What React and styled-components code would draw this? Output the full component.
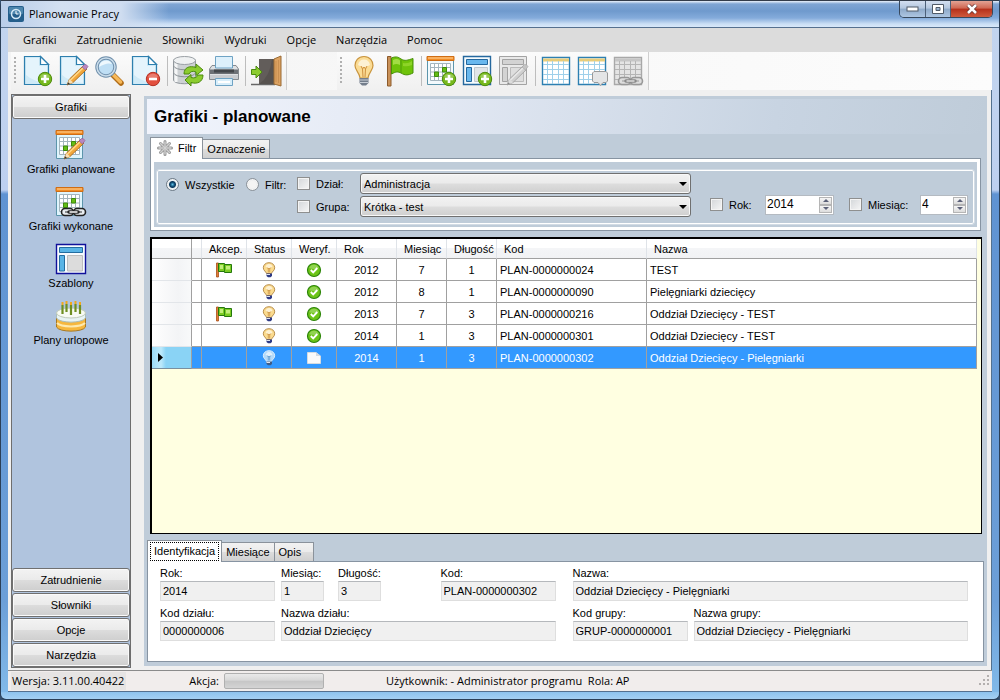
import React from 'react';
import styled, { createGlobalStyle, css } from 'styled-components';

const sans = '"Liberation Sans", Arial, sans-serif';
const shell = '"Open Sans", "Noto Sans", sans-serif';

const GlobalStyle = createGlobalStyle`
  * { box-sizing: border-box; }
  body { margin: 0; background: #35506f; font: 11px/14px ${sans}; color: #000; }
  button, input, select { font: inherit; color: inherit; margin: 0; }
  button { padding: 0; border: 0; background: none; }
`;

/* ---------- window frame ---------- */

const Window = styled.div`
  min-height: 100vh;
  display: grid;
  grid-template-rows: 28px 24px 38px 1fr 22px;
  padding: 0 7px 7px 7px;
  border: 1px solid #2b3f57;
  border-top: 0;
  border-radius: 6px;
  background:
    linear-gradient(#8ec3ee, #a5d0f3) bottom / 100% 7px no-repeat,
    linear-gradient(#c3d5ee 0, #bdd0f0 190px, #5f93d2 194px, #6c9fd8 600px, #83bbea 100%);
`;

const TitleBar = styled.header`
  display: flex;
  align-items: center;
  gap: 5px;
  margin: 0 -7px;
  padding-left: 7px;
  border-top: 1px solid #333c4a;
  border-bottom: 1px solid #55708f;
  background:
    linear-gradient(90deg, #b9cde9 0, #d3e0f1 60px, #cfddf0 120px, rgba(190, 211, 238, 0) 168px),
    linear-gradient(#eaf2fb 0, #7fa5d4 3px, #6f9acd 10px, #84abdb 17px, #cbdff5 23px, #d8e8fa 100%);
`;

const WindowTitle = styled.h1`
  flex: 1;
  margin: 0;
  font: 11px/18px ${shell};
`;

const Caption = styled.div`
  display: flex;
  align-self: flex-start;
  margin-right: 6px;
  border: 1px solid #38485c;
  border-top: 0;
  border-radius: 0 0 5px 5px;
  overflow: hidden;
`;

const CaptionButton = styled.button`
  width: ${(p) => (p.$close ? 42 : 25)}px;
  height: 16px;
  display: grid;
  place-items: center;
  background: ${(p) => (p.$close
    ? 'linear-gradient(#e3a394 0, #cf6752 45%, #b5301b 50%, #cf5a3d 100%)'
    : 'linear-gradient(#d3dff0 0, #b3c6de 45%, #8ea9c9 50%, #aec6e2 100%)')};
  & + & { border-left: 1px solid #4d6079; }
`;

const MenuBar = styled.nav`
  display: flex;
  align-items: center;
  gap: 20px;
  padding-left: 15px;
  background: #dcdcdc;
  font: 11px/18px ${shell};
`;

const MenuItem = styled.button`
  white-space: nowrap;
`;

const ToolRow = styled.div`
  display: flex;
  gap: 50px;
  padding-left: 3px;
  background: linear-gradient(90deg, #f4f4f4, #fcfcfc);
`;

const ToolStrip = styled.div`
  display: flex;
  align-items: center;
  padding: 0 2px 0 3px;
  border-right: 1px solid #cfcfcf;
  background: linear-gradient(#fbfbfb, #f0f0f0);
`;

const Grip = styled.span`
  width: 2px;
  height: 28px;
  margin-right: 4px;
  background: repeating-linear-gradient(#b0b0b0 0 2px, transparent 2px 4px);
`;

const ToolSeparator = styled.span`
  width: 1px;
  height: 30px;
  margin: 0 2px 0 3px;
  background: #bdbdbd;
`;

const ToolButton = styled.button`
  width: 36px;
  height: 36px;
  display: grid;
  place-items: center;
`;

const Content = styled.div`
  display: flex;
  gap: 13px;
  padding: 4px 4px 2px 3px;
  background: #f0f0f0;
  border-right: 1px solid #53718f;
`;

/* ---------- side bar ---------- */

const SideBar = styled.aside`
  flex: none;
  width: 120px;
  display: flex;
  flex-direction: column;
  gap: 1px;
  border: 1px solid #6e6e6e;
  background: #b0c4de;
`;

const SideButton = styled.button`
  height: 24px;
  border: 1px solid #707070;
  border-radius: 3px;
  box-shadow: inset 0 0 0 1px #fafafa;
  background: linear-gradient(#f3f3f3 0, #ebebeb 48%, #dcdcdc 52%, #cecece 100%);
`;

const SideItems = styled.div`
  flex: 1;
  display: flex;
  flex-direction: column;
  align-items: center;
  gap: 10px;
  padding-top: 9px;
`;

const SideItem = styled.button`
  display: grid;
  justify-items: center;
  gap: 1px;
  svg { display: block; }
`;

/* ---------- main area ---------- */

const Main = styled.main`
  flex: 1;
  min-width: 0;
  display: flex;
  flex-direction: column;
  margin: 2px 0;
  padding: 3px 3px 4px;
  background: #bfccd9;
`;

const PageHeading = styled.h2`
  margin: 0 0 3px;
  padding-left: 7px;
  font: bold 17px/35px ${sans};
  background: linear-gradient(100deg, #f1f4fc 0, #e2e8f3 35%, #c8d4e2 75%, #bfccd9 100%);
`;

const Tabs = styled.div`
  display: flex;
  align-items: flex-end;
  padding-left: ${(p) => (p.$inset ? 3 : 0)}px;
`;

const Tab = styled.button`
  position: relative;
  height: 19px;
  min-width: 39px;
  padding: 0 4px;
  text-align: left;
  border: 1px solid #8a929b;
  border-bottom: 0;
  border-left-width: ${(p) => (p.$active ? 1 : 0)}px;
  background: linear-gradient(#f2f2f2 0, #ebebeb 48%, #dddddd 52%, #d0d0d0 100%);
  ${(p) => p.$active && css`
    height: 22px;
    margin-bottom: -1px;
    padding-bottom: 3px;
    background: #fff;
    z-index: 1;
  `}
  ${(p) => p.$icon && css`
    display: flex;
    align-items: center;
    gap: 5px;
    padding: 0 6px 2px;
  `}
`;

const FocusText = styled.span`
  display: block;
  margin: 0 -2px -2px;
  padding: 1px 3px 2px;
  border: 1px dotted #000;
`;

const FilterPanel = styled.section`
  margin: 0 3px 6px;
  padding: 3px;
  border: 1px solid #8794a2;
  background: #fff;
`;

const FilterInner = styled.div`
  padding: 8px 3px 3px;
  background: #bfccd9;
`;

const FilterGroup = styled.fieldset`
  display: flex;
  align-items: center;
  margin: 0;
  min-width: 0;
  padding: 2px 5px 6px 8px;
  border: 1px solid #fff;
  outline: 1px solid #d3dce5;
  border-radius: 2px;
`;

const Choice = styled.label`
  display: flex;
  align-items: center;
  gap: 6px;
  width: ${(p) => p.$width}px;
  height: 21px;
  flex: none;
`;

const Radio = styled.input.attrs({ type: 'radio' })`
  appearance: none;
  width: 13px;
  height: 13px;
  border: 1px solid #8b9299;
  border-radius: 50%;
  background: radial-gradient(#f4f4f4 40%, #dde0e3 100%);
  box-shadow: inset 0 0 0 1px #f4f4f4;
  &:checked {
    border-color: #6d7a86;
    background: radial-gradient(circle at 50% 50%, #5fc0e4 0, #12507a 2px, #0d3a5c 3px, #e8eef2 4px);
  }
`;

const Check = styled.input.attrs({ type: 'checkbox' })`
  appearance: none;
  width: 13px;
  height: 13px;
  border: 1px solid #8e8f8f;
  background: linear-gradient(135deg, #d3d6d9, #f6f6f6);
  box-shadow: inset 0 0 0 1px #f4f4f4;
`;

const FilterRadios = styled.div`
  display: flex;
  align-self: flex-start;
  padding-top: 1px;
`;

const FilterPicks = styled.div`
  flex: 1;
  display: grid;
  grid-template-columns: 63px 1fr;
  row-gap: 2px;
`;

const SelectBox = styled.span`
  display: grid;
  grid-template-columns: 1fr 14px;
  align-items: center;
  height: 21px;
  border: 1px solid #707070;
  border-radius: 3px;
  box-shadow: inset 0 0 0 1px #f8f8f8;
  background: linear-gradient(#f2f2f2 0, #ebebeb 48%, #dddddd 52%, #cfcfcf 100%);
  select {
    grid-area: 1 / 1 / 2 / 3;
    width: 100%;
    height: 19px;
    padding: 0 16px 0 3px;
    border: 0;
    appearance: none;
    background: none;
  }
  svg { grid-area: 1 / 2; justify-self: center; pointer-events: none; }
`;

const FilterNumbers = styled.div`
  display: flex;
  align-items: center;
  align-self: flex-end;
  margin: 0 0 2px 19px;
`;

const SpinBox = styled.span`
  display: flex;
  width: ${(p) => p.$width}px;
  height: 20px;
  margin-right: ${(p) => p.$gap || 0}px;
  border: 1px solid #b4bac1;
  background: #fff;
  input {
    flex: 1;
    min-width: 0;
    padding: 0 1px 2px;
    border: 0;
    background: none;
    font-size: 12px;
  }
`;

const SpinButtons = styled.span`
  display: grid;
  width: 15px;
  grid-template-rows: 1fr 1fr;
  padding: 1px;
  button {
    display: grid;
    place-items: center;
    border: 1px solid #b5b5b5;
    background: linear-gradient(#f6f6f6, #dcdcdc);
  }
`;

/* ---------- data grid ---------- */

const GridFrame = styled.section`
  flex: 1;
  margin: 0 2px 6px 3px;
  padding-right: 4px;
  border: solid #000;
  border-width: 2px 1px 1px 2px;
  background: #ffffe1;
`;

const DataTable = styled.table`
  width: 100%;
  table-layout: fixed;
  border-collapse: separate;
  border-spacing: 0;
  background: #fff;
`;

const HeadCell = styled.th`
  height: 20px;
  padding: 0 0 0 7px;
  border-right: 1px solid #dfe3e8;
  border-bottom: 1px solid #a0a0a0;
  background: linear-gradient(#fff 0, #fff 45%, #f4f5f7 50%, #f1f2f4 100%);
  font-weight: normal;
  text-align: left;
  white-space: nowrap;
  &:first-child { border-right-color: #a0a0a0; }
`;

const Row = styled.tr`
  ${(p) => p.$selected && css`
    background: #3399ff;
    color: #fff;
  `}
`;

const Cell = styled.td`
  height: 22px;
  padding: 0 3px;
  border-right: 1px solid #a0a0a0;
  border-bottom: 1px solid #a0a0a0;
  text-align: ${(p) => (p.$center ? 'center' : 'left')};
  white-space: nowrap;
  svg { display: block; margin: 0 auto; }
`;

const RowHead = styled(Cell)`
  padding: 0 0 0 6px;
  background: ${(p) => (p.$selected
    ? 'linear-gradient(90deg, #9bdcf8 0, #bde9fb 9px, #8ad3f5 14px, #8ad3f5 100%)'
    : 'linear-gradient(90deg, #fff 0, #fafafb 10px, #f3f4f6 26px, #f8f9fa 100%)')};
  border-bottom-color: ${(p) => (p.$selected ? '#7a8f9f' : '#e2e5e9')};
  svg { margin: 0; }
`;

/* ---------- record details ---------- */

const Details = styled.section`
  height: 101px;
  display: grid;
  grid-template-columns: 1fr 1fr;
  align-content: start;
  gap: 5px 17px;
  padding: 4px 15px 0 12px;
  border: 1px solid #8794a2;
  background: #fff;
`;

const FieldLine = styled.div`
  display: flex;
  gap: 6px;
`;

const Field = styled.label`
  display: grid;
  gap: 1px;
  min-width: 0;
  flex: ${(p) => (p.$width ? `0 0 ${p.$width}px` : '1')};
  margin-left: ${(p) => (p.$end ? 'auto' : p.$apart ? '8px' : '0')};
  white-space: nowrap;
  input {
    width: 100%;
    height: 20px;
    padding: 0 2px;
    border: 1px solid #dedede;
    border-top-color: #b5b8bc;
    background: #f0f0f0;
  }
`;

/* ---------- status bar ---------- */

const StatusBar = styled.footer`
  display: flex;
  align-items: center;
  border-top: 1px solid #8b8b8b;
  border-bottom: 1px solid #55708f;
  padding-left: 3px;
  background: #f1edec;
  font: 11px/18px ${shell};
  white-space: nowrap;
`;

const Version = styled.span`
  width: 115px;
  padding-left: 1px;
  background: #e6e4e3;
`;

const ActionLabel = styled.label`
  display: flex;
  align-items: center;
  justify-content: flex-end;
  gap: 5px;
  width: 198px;
`;

const ActionProgress = styled.progress`
  appearance: none;
  width: 100px;
  height: 16px;
  border: 1px solid #b0b0b0;
  border-radius: 2px;
  background: linear-gradient(#e9e9e9 0, #d8d8d8 45%, #c6c6c6 50%, #d4d4d4 100%);
  &::-webkit-progress-bar { background: none; }
`;

const UserInfo = styled.span`
  flex: 1;
  padding-left: 62px;
  white-space: pre;
`;

/* ---------- icons ---------- */

const Svg = ({ size = 32, box = 32, children }) => (
  <svg width={size} height={size} viewBox={`0 0 ${box} ${box}`} fill="none" aria-hidden="true">{children}</svg>
);

const Sheet = () => (
  <>
    <path d="M2.500 1.500H18.500L26.500 9.500V29.500H2.500Z" fill="#cfeaf7" stroke="#2e7fae" strokeWidth="1.200" />
    <path d="M4 3H17V11H25V28Q12 27 4 20Z" fill="#eef8fd" opacity=".7" />
    <path d="M18.500 1.500V9.500H26.500Z" fill="#fff" stroke="#2e7fae" strokeWidth="1.200" />
  </>
);

const Badge = ({ minus }) => (
  <>
    <circle cx="23" cy="24" r="6.700" fill={minus ? '#e2503f' : '#76b81c'} stroke={minus ? '#b43226' : '#4d8a0c'} />
    <path d="M18 22a5.500 5.500 0 0 1 10 0Q23 24 18 22Z" fill="#fff" opacity=".25" />
    <path d={minus ? 'M19 24H27' : 'M19 24H27M23 20V28'} stroke="#fff" strokeWidth="2.600" />
  </>
);

const Pencil = ({ gray }) => (
  <>
    <path d="M9 30L11.500 24L25.500 10.500L29 14L15 27.500Z" fill={gray ? '#d0d0d0' : '#f2a73b'} stroke={gray ? '#a2a2a2' : '#a5661a'} strokeWidth=".9" />
    <path d="M12.500 25L26.500 11.500" stroke={gray ? '#e8e8e8' : '#ffd98a'} strokeWidth="1.500" />
    <path d="M9 30L11.500 24L15 27.500Z" fill={gray ? '#ddd' : '#f8dfb4'} />
    <path d="M9 30L10.200 27.200L12 29Z" fill={gray ? '#888' : '#333'} />
    <path d="M24 12L26.500 9.500Q28.500 9 30 11.500L27.500 15Z" fill={gray ? '#c4c4c4' : '#b887c0'} stroke={gray ? '#aaa' : '#8f6198'} strokeWidth=".7" />
  </>
);

const IconNew = () => <Svg><Sheet /><Badge /></Svg>;
const IconEdit = () => <Svg><Sheet /><Pencil /></Svg>;
const IconDelete = () => <Svg><Sheet /><Badge minus /></Svg>;

const IconSearch = () => (
  <Svg>
    <path d="M19 20L27 28" stroke="#b06c17" strokeWidth="5.500" strokeLinecap="round" />
    <path d="M19 19.500L26.500 27" stroke="#f7b95a" strokeWidth="3.500" strokeLinecap="round" />
    <circle cx="12" cy="12" r="9" fill="#bfdff5" stroke="#6f8fab" strokeWidth="3.500" />
    <circle cx="12" cy="12" r="9" stroke="#c9dcea" strokeWidth="1.500" />
    <path d="M5 12a7 7 0 0 1 13-3Q13 7 5 12Z" fill="#eef8fe" />
  </Svg>
);

const IconDatabase = () => (
  <Svg>
    <path d="M1.500 5V25C1.500 30 23.500 30 23.500 25V5Z" fill="#cdd1d4" stroke="#92989d" />
    <path d="M4 7V27" stroke="#f5f6f7" strokeWidth="3" />
    <path d="M1.500 11C4 16 21 16 23.500 11M1.500 18C4 23 21 23 23.500 18" stroke="#8b9196" />
    <ellipse cx="12.500" cy="5.500" rx="11" ry="4" fill="#eff1f2" stroke="#9aa0a5" />
    <path d="M12 19C12 12 18 10.500 24 12.500V9L31 15L24 20.500V17Q19 15 17 19Z" fill="#8ccc2f" stroke="#4b8b0d" />
    <path d="M31 20C31 27 25 29.500 19 27.500V31L13 25L19 19.500V22.500Q24 24 26 20Z" fill="#8ccc2f" stroke="#4b8b0d" />
  </Svg>
);

const IconPrint = () => (
  <Svg>
    <path d="M1.500 14L4 10.500H28L30.500 14V24.500H1.500Z" fill="#dfe1e3" stroke="#868b90" />
    <path d="M7.500 1.500H24.500V13H7.500Z" fill="#ddf0fb" stroke="#6ea3c4" />
    <path d="M2 14.500H30V19H2Z" fill="#6d7176" />
    <path d="M6 14.500H26V17.500H6Z" fill="#44484c" />
    <path d="M2 20H30V24H2Z" fill="#c9ccd0" />
    <path d="M7.500 23.500H24.500V30.500H7.500Z" fill="#d8eefa" stroke="#6ea3c4" />
    <path d="M10 27H22" stroke="#fff" strokeWidth="2" />
  </Svg>
);

const IconExit = () => (
  <Svg>
    <path d="M1 29.500H25" stroke="#666" strokeWidth="1.500" />
    <path d="M9 4H24V29H9Z" fill="#57524f" />
    <path d="M9 29Q20 22 22 4H9Z" fill="#625d5a" />
    <path d="M24 4L31 1V31L24 29Z" fill="#dca261" stroke="#9a6b35" />
    <path d="M26 6V27M28.500 5V28" stroke="#c98f50" />
    <path d="M1.500 14.500H6V11L12 17L6 23V19.500H1.500Z" fill="#8ccc2f" stroke="#4b8b0d" />
  </Svg>
);

const IconBulb = () => (
  <Svg>
    <path d="M16 1.500C10 1.500 7 6 7 10.500C7 15.500 11.500 17.500 12 23H20C20.500 17.500 25 15.500 25 10.500C25 6 22 1.500 16 1.500Z" fill="#fbdc95" stroke="#c9953f" strokeWidth="1.200" />
    <path d="M10 10Q11 4.500 16 4.500Q21 4.500 22 10Q16 14 10 10Z" fill="#fff" opacity=".6" />
    <path d="M13 11L14.500 14L16 12L17.500 14L19 11M14.500 14L15 22M17.500 14L17 22" stroke="#cf9140" />
    <path d="M11.500 23H20.500V28L18 30.500H14L11.500 28Z" fill="#737d8b" />
    <path d="M12 25H20M12 27.500H20" stroke="#c8ced6" />
  </Svg>
);

const IconFlag = () => (
  <Svg>
    <path d="M3.500 1.500H7V31H3.500Z" fill="#c99159" stroke="#8c5a2b" />
    <path d="M7.500 3C12 1 14 2 17 4C21 6.500 24 5 29 3.500V18C24 20.500 21 20.500 17 18C14 16.500 12 16.500 7.500 19Z" fill="#6fc30a" stroke="#489007" />
    <path d="M9 5Q13 3 16 5.500V10Q12 8 9 10Z" fill="#b9e85e" opacity=".7" />
    <path d="M17 5V18" stroke="#4f9d0b" />
    <path d="M19 8Q24 9 28 6V10Q23 12 19 11Z" fill="#9bdc35" opacity=".7" />
  </Svg>
);

const Calendar = ({ bright }) => (
  <>
    <path d="M1.500 5H27.500V29.500H1.500Z" fill={bright ? '#dff4fc' : '#f3fafd'} stroke="#5c95ab" />
    <path d="M1 1.500H28V5.500H1Z" fill="#f28c24" stroke="#cf6d14" />
    <path d="M2 3H27" stroke="#ffd59b" />
    <path d="M4.500 8.500H24.500V25.500H4.500Z" fill="#fff" stroke="#a4b5be" />
    <path d="M4.500 12.500H24.500M4.500 17H24.500M4.500 21.500H24.500M8.500 8.500V25.500M12.500 8.500V25.500M16.500 8.500V25.500M20.500 8.500V25.500" stroke="#a4b5be" />
    <path d="M8.500 17H12.500V21.500H8.500ZM16.500 12.500H20.500V17H16.500Z" fill="#64bd16" stroke="#3f8c0b" />
  </>
);

const Chain = ({ gray }) => (
  <>
    <rect x="6.500" y="22.500" width="12" height="7" rx="3.500" fill={gray ? '#ddd' : '#e9edf0'} stroke={gray ? '#989898' : '#222'} strokeWidth="1.600" />
    <rect x="18.500" y="22.500" width="12" height="7" rx="3.500" fill={gray ? '#ddd' : '#e9edf0'} stroke={gray ? '#989898' : '#222'} strokeWidth="1.600" />
    <path d="M10 26H15M22 26H27" stroke={gray ? '#999' : '#333'} strokeWidth="1.200" />
    <path d="M14 26H23" stroke={gray ? '#888' : '#222'} strokeWidth="3.500" strokeLinecap="round" />
    <path d="M14.500 26H22.500" stroke={gray ? '#ddd' : '#fff'} strokeWidth="1.500" />
  </>
);

const Template = ({ gray }) => {
  const edge = gray ? '#a3a3a3' : '#25689e';
  const fill = gray ? '#d3d3d3' : '#69b8ee';
  return (
    <>
      <path d="M1.500 1.500H28.500V29.500H1.500Z" fill={gray ? '#e9e9e9' : '#f5fbfe'} stroke={edge} strokeWidth={gray ? 1 : 1.400} />
      <path d="M4.500 4.500H25.500V9.500H4.500Z" fill={fill} stroke={edge} />
      <path d="M4.500 12.500H9.500V26.500H4.500Z" fill={fill} stroke={edge} />
      <path d="M12.500 12.500H25.500V26.500H12.500Z" fill={gray ? '#dedede' : '#e1e5e8'} stroke={gray ? '#bbb' : '#c1c8cd'} />
    </>
  );
};

const Spreadsheet = ({ gray }) => (
  <>
    <path d="M2.500 2.500H29.500V29.500H2.500Z" fill={gray ? '#e4e4e4' : '#fff'} stroke={gray ? '#a8a8a8' : '#2d7fb1'} strokeWidth="1.400" />
    <path d="M3 3.500H29V6.500H3Z" fill={gray ? '#c6c6c6' : '#e7cd7c'} />
    <path d="M3 9.500H29M3 14.500H29M3 19.500H29M3 24.500H29M7.500 6V29M12.500 6V29M18.500 6V29M23.500 6V29" stroke={gray ? '#b5b5b5' : '#9fd0ea'} />
  </>
);

const IconCalAdd = () => <Svg><Calendar /><Badge /></Svg>;
const IconTplAdd = () => <Svg><Template /><Badge /></Svg>;
const IconTplEdit = () => <Svg><Template gray /><Pencil gray /></Svg>;
const IconTable = () => <Svg><Spreadsheet /></Svg>;
const IconTableNote = () => (
  <Svg>
    <Spreadsheet />
    <path d="M18 16.500H30L31.500 18V26L30 27.500H27L24.500 30.500L22 27.500H18L16.500 26V18Z" fill="#e4e5e6" stroke="#999" />
  </Svg>
);
const IconTableLink = () => <Svg><Spreadsheet gray /><Chain gray /></Svg>;

const IconPlan = () => <Svg><Calendar bright /><Pencil /></Svg>;
const IconDone = () => <Svg><Calendar bright /><Chain /></Svg>;
const IconTemplate = () => (
  <Svg>
    <path d="M1.500 1.500H30.500V30.500H1.500Z" fill="#f7fbff" stroke="#10109a" strokeWidth="1.400" />
    <path d="M4.500 4.500H27.500V9.500H4.500Z" fill="#58b4e6" stroke="#236da0" />
    <path d="M4.500 12.500H9.500V28H4.500Z" fill="#58b4e6" stroke="#236da0" />
    <path d="M12.500 12.500H27.500V28H12.500Z" fill="#dcdcdc" stroke="#bdbdbd" />
  </Svg>
);
const IconCake = () => (
  <Svg>
    <path d="M1.500 14V27C4 32.500 28 32.500 30.500 27V14Z" fill="#f6b73d" stroke="#a77924" />
    <path d="M2 23C6 27.500 26 27.500 30 23" stroke="#fde9ae" strokeWidth="2" />
    <path d="M1.500 13V18C5 23.500 27 23.500 30.500 18V13Z" fill="#e8f4f4" stroke="#a9bdbd" />
    <ellipse cx="16" cy="13" rx="14.500" ry="5" fill="#f8fbf4" stroke="#c0cbb9" />
    <path d="M7.500 5V14M11.500 4V12M16 5V15M20.500 4V12M25 5V14" stroke="#6f8f22" strokeWidth="2.200" />
    <path d="M7.500 2V5M11.500 1V4M16 2V5M20.500 1V4M25 2V5" stroke="#f0a81c" strokeWidth="2" />
  </Svg>
);

const SmallFlag = () => (
  <Svg size={16} box={16}>
    <path d="M.5 1H2.500V15H.5Z" fill="#e08038" stroke="#a84d16" strokeWidth=".8" />
    <path d="M2.500 1.500H8.500V2.500H15.500V10.500H8.500V9.500H2.500Z" fill="#7ccc23" stroke="#24780c" />
    <path d="M4 3H7V7H4ZM10 4H14V7.500H10Z" fill="#c2ee7d" />
    <path d="M8.500 2V10" stroke="#2f8a10" />
  </Svg>
);
const SmallBulb = ({ blue }) => (
  <Svg size={16} box={16}>
    <path d="M8 .7C4.500 .7 2.300 3 2.300 5.800C2.300 8.500 5 9.500 5.500 11.500H10.500C11 9.500 13.700 8.500 13.700 5.800C13.700 3 11.500 .7 8 .7Z" fill={blue ? '#b4daf8' : '#fbdb8e'} stroke={blue ? '#dceefd' : '#b98f4d'} />
    <path d="M4.500 5Q5.500 2 8 2T11.500 5Q8 7 4.500 5Z" fill="#fff" opacity=".6" />
    <path d="M6.200 5.500L7.300 7L8 6L8.700 7L9.800 5.500M7.300 7V10.500M8.700 7V10.500" stroke={blue ? '#5590c8' : '#c58b3c'} strokeWidth=".7" />
    <path d="M5.500 11.500H11V14L9.500 15.300H7L5.500 14Z" fill={blue ? '#3f5c86' : '#2d3a86'} />
    <path d="M5.500 12.500H9" stroke="#dfe5ef" />
  </Svg>
);
const SmallOk = () => (
  <Svg size={16} box={16}>
    <circle cx="8" cy="8" r="6.500" fill="#6cc417" stroke="#2c8409" strokeWidth="1.200" />
    <path d="M3 6a5.400 5.400 0 0 1 10 0Q8 8 3 6Z" fill="#fff" opacity=".25" />
    <path d="M4.800 8L7.200 10.400L11.300 6" stroke="#fff" strokeWidth="1.900" />
  </Svg>
);
const SmallPage = () => (
  <Svg size={16} box={16}>
    <path d="M1.500 2.500H10L14.500 6V13.500H1.500Z" fill="#fafafa" stroke="#d5dbe0" />
    <path d="M10 2.500V6H14.500Z" fill="#d2dae2" />
  </Svg>
);
const AppLogo = () => (
  <Svg size={16} box={16}>
    <rect width="16" height="16" rx="2" fill="#245e8b" />
    <rect x="1" y="1" width="14" height="7" rx="1" fill="#4d86ad" />
    <circle cx="8" cy="8" r="4.500" stroke="#d4e9f7" strokeWidth="1.500" />
    <path d="M8 5V8H10.500" stroke="#fff" />
  </Svg>
);
const GearIcon = () => (
  <Svg size={16} box={16}>
    <path d="M8 1.500V14.500M1.500 8H14.500M3.500 3.500L12.500 12.500M12.500 3.500L3.500 12.500" stroke="#979797" strokeWidth="3" strokeLinecap="round" />
    <path d="M8 2V14M2 8H14M3.500 3.500L12.500 12.500M12.500 3.500L3.500 12.500" stroke="#cfcfcf" strokeWidth="1.400" strokeLinecap="round" />
    <circle cx="8" cy="8" r="1.200" fill="#fff" stroke="#999" strokeWidth=".6" />
  </Svg>
);
const Arrow = ({ up, w = 8, color = '#000' }) => (
  <svg width={w} height={w === 8 ? 4 : 3} viewBox="0 0 8 4" aria-hidden="true">
    <path d={up ? 'M0 4L4 0L8 4Z' : 'M0 0H8L4 4Z'} fill={color} />
  </svg>
);

/* ---------- data ---------- */

const menu = ['Grafiki', 'Zatrudnienie', 'Słowniki', 'Wydruki', 'Opcje', 'Narzędzia', 'Pomoc'];

const strips = [
  [[['Nowy', IconNew], ['Edytuj', IconEdit], ['Szukaj', IconSearch], ['Usuń', IconDelete]],
    [['Odśwież', IconDatabase], ['Drukuj', IconPrint]],
    [['Zamknij', IconExit]]],
  [[['Status', IconBulb], ['Akceptacja', IconFlag]],
    [['Dodaj grafik', IconCalAdd], ['Dodaj szablon', IconTplAdd], ['Edytuj szablon', IconTplEdit]],
    [['Tabela', IconTable], ['Uwagi', IconTableNote], ['Powiązania', IconTableLink]]],
];

const sideItems = [
  ['Grafiki planowane', IconPlan],
  ['Grafiki wykonane', IconDone],
  ['Szablony', IconTemplate],
  ['Plany urlopowe', IconCake],
];

const widths = [40, 10, 45, 45, 45, 60, 50, 50, 150];
const heads = ['', '', 'Akcep.', 'Status', 'Weryf.', 'Rok', 'Miesiąc', 'Długość', 'Kod', 'Nazwa'];
const rows = [
  [true, 2012, 7, 1, 'PLAN-0000000024', 'TEST'],
  [false, 2012, 8, 1, 'PLAN-0000000090', 'Pielęgniarki dziecięcy'],
  [true, 2013, 7, 3, 'PLAN-0000000216', 'Oddział Dziecięcy - TEST'],
  [false, 2014, 1, 3, 'PLAN-0000000301', 'Oddział Dziecięcy - TEST'],
  [false, 2014, 1, 3, 'PLAN-0000000302', 'Oddział Dziecięcy - Pielęgniarki'],
];

const ReadField = ({ label, value, ...rest }) => (
  <Field {...rest}>{label}<input readOnly value={value} /></Field>
);

const Spin = ({ id, value, label, ...rest }) => (
  <SpinBox {...rest}>
    <input id={id} type="text" defaultValue={value} aria-label={label} />
    <SpinButtons>
      <button type="button" aria-label="Zwiększ"><Arrow up w={6} color="#5b6078" /></button>
      <button type="button" aria-label="Zmniejsz"><Arrow w={6} color="#5b6078" /></button>
    </SpinButtons>
  </SpinBox>
);

export default function App() {
  return (
    <Window>
      <GlobalStyle />
      <TitleBar>
        <AppLogo />
        <WindowTitle>Planowanie Pracy</WindowTitle>
        <Caption>
          <CaptionButton aria-label="Minimalizuj">
            <svg width="13" height="6" viewBox="0 0 13 6"><rect x="1" y="1" width="11" height="4" fill="#fff" stroke="#505a68" /></svg>
          </CaptionButton>
          <CaptionButton aria-label="Maksymalizuj">
            <svg width="12" height="10" viewBox="0 0 12 10"><path fillRule="evenodd" d="M.5.5H11.500V9.500H.5ZM4 3.500H8V6.500H4Z" fill="#fff" stroke="#505a68" /></svg>
          </CaptionButton>
          <CaptionButton $close aria-label="Zamknij okno">
            <svg width="12" height="10" viewBox="0 0 12 10"><path d="M2 1L10 9M10 1L2 9" stroke="#5a2a28" strokeWidth="4" /><path d="M2 1L10 9M10 1L2 9" stroke="#fff" strokeWidth="2.600" /></svg>
          </CaptionButton>
        </Caption>
      </TitleBar>

      <MenuBar>{menu.map((m) => <MenuItem key={m}>{m}</MenuItem>)}</MenuBar>

      <ToolRow>
        {strips.map((groups, s) => (
          <ToolStrip key={s} role="toolbar">
            <Grip />
            {groups.map((group, g) => (
              <React.Fragment key={g}>
                {g > 0 && <ToolSeparator />}
                {group.map(([name, Icon]) => <ToolButton key={name} aria-label={name}><Icon /></ToolButton>)}
              </React.Fragment>
            ))}
          </ToolStrip>
        ))}
      </ToolRow>

      <Content>
        <SideBar>
          <SideButton>Grafiki</SideButton>
          <SideItems>
            {sideItems.map(([name, Icon]) => <SideItem key={name}><Icon />{name}</SideItem>)}
          </SideItems>
          {['Zatrudnienie', 'Słowniki', 'Opcje', 'Narzędzia'].map((n) => <SideButton key={n}>{n}</SideButton>)}
        </SideBar>

        <Main>
          <PageHeading>Grafiki - planowane</PageHeading>
          <Tabs role="tablist" $inset>
            <Tab role="tab" $active $icon><GearIcon />Filtr</Tab>
            <Tab role="tab">Oznaczenie</Tab>
          </Tabs>
          <FilterPanel>
            <FilterInner>
              <FilterGroup>
                <FilterRadios>
                  <Choice $width={80}><Radio name="mode" defaultChecked />Wszystkie</Choice>
                  <Choice $width={51}><Radio name="mode" />Filtr:</Choice>
                </FilterRadios>
                <FilterPicks>
                  <Choice $width={63}><Check />Dział:</Choice>
                  <SelectBox>
                    <select aria-label="Dział"><option>Administracja</option></select>
                    <Arrow />
                  </SelectBox>
                  <Choice $width={63}><Check />Grupa:</Choice>
                  <SelectBox>
                    <select aria-label="Grupa"><option>Krótka - test</option></select>
                    <Arrow />
                  </SelectBox>
                </FilterPicks>
                <FilterNumbers>
                  <Choice $width={55}><Check />Rok:</Choice>
                  <Spin $width={69} $gap={15} value="2014" label="Rok" />
                  <Choice $width={71}><Check />Miesiąc:</Choice>
                  <Spin $width={48} value="4" label="Miesiąc" />
                </FilterNumbers>
              </FilterGroup>
            </FilterInner>
          </FilterPanel>

          <GridFrame>
            <DataTable>
              <colgroup>
                {widths.map((w, i) => <col key={i} width={w} />)}
                <col />
              </colgroup>
              <thead>
                <tr>{heads.map((h, i) => <HeadCell key={i}>{h}</HeadCell>)}</tr>
              </thead>
              <tbody>
                {rows.map(([flag, year, month, length, code, name], i) => {
                  const selected = i === rows.length - 1;
                  return (
                    <Row key={code} $selected={selected}>
                      <RowHead $selected={selected}>
                        {selected && <svg width="5" height="9" viewBox="0 0 5 9"><path d="M0 0L5 4.500L0 9Z" fill="#000" /></svg>}
                      </RowHead>
                      <Cell />
                      <Cell>{flag && <SmallFlag />}</Cell>
                      <Cell><SmallBulb blue={selected} /></Cell>
                      <Cell>{selected ? <SmallPage /> : <SmallOk />}</Cell>
                      <Cell $center>{year}</Cell>
                      <Cell $center>{month}</Cell>
                      <Cell $center>{length}</Cell>
                      <Cell>{code}</Cell>
                      <Cell>{name}</Cell>
                    </Row>
                  );
                })}
              </tbody>
            </DataTable>
          </GridFrame>

          <Tabs role="tablist">
            <Tab role="tab" $active><FocusText>Identyfikacja</FocusText></Tab>
            <Tab role="tab">Miesiące</Tab>
            <Tab role="tab">Opis</Tab>
          </Tabs>
          <Details>
            <FieldLine>
              <ReadField $width={115} label="Rok:" value="2014" />
              <ReadField $width={43} label="Miesiąc:" value="1" />
              <ReadField $width={43} $apart label="Długość:" value="3" />
              <ReadField $width={115} $end label="Kod:" value="PLAN-0000000302" />
            </FieldLine>
            <FieldLine>
              <ReadField label="Nazwa:" value="Oddział Dziecięcy - Pielęgniarki" />
            </FieldLine>
            <FieldLine>
              <ReadField $width={115} label="Kod działu:" value="0000000006" />
              <ReadField label="Nazwa działu:" value="Oddział Dziecięcy" />
            </FieldLine>
            <FieldLine>
              <ReadField $width={115} label="Kod grupy:" value="GRUP-0000000001" />
              <ReadField label="Nazwa grupy:" value="Oddział Dziecięcy - Pielęgniarki" />
            </FieldLine>
          </Details>
        </Main>
      </Content>

      <StatusBar>
        <Version>Wersja: 3.11.00.40422</Version>
        <ActionLabel>Akcja:<ActionProgress value={0} max={100} /></ActionLabel>
        <UserInfo>{'Użytkownik: - Administrator programu  Rola: AP'}</UserInfo>
        <svg width="14" height="14" viewBox="0 0 14 14" aria-hidden="true">
          <path d="M9 1h2v2H9zM5 5h2v2H5zM9 5h2v2H9zM1 9h2v2H1zM5 9h2v2H5zM9 9h2v2H9z" fill="#b3afae" />
        </svg>
      </StatusBar>
    </Window>
  );
}
